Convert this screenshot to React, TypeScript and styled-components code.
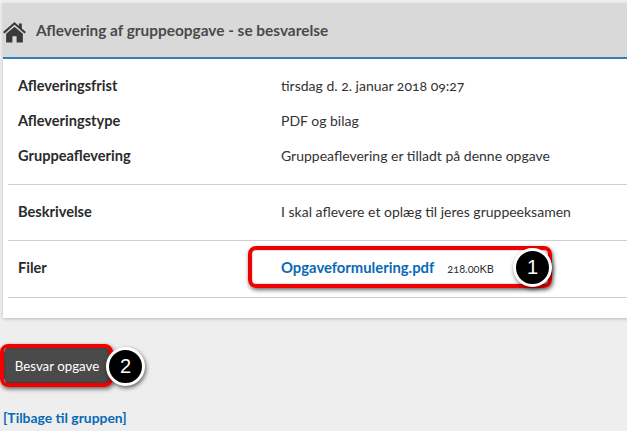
import React from "react";
import styled, { createGlobalStyle } from "styled-components";

const Global = createGlobalStyle`
  html, body { margin: 0; padding: 0; background: #eeeeee; }
  body { font-family: Lato, "Open Sans", sans-serif; font-variant-numeric: oldstyle-nums; width: 627px; height: 431px; overflow: hidden; }
`;

const Page = styled.div`
  position: relative;
  width: 627px;
  height: 431px;
  padding: 3px 0 0 3px;
  box-sizing: border-box;
`;

const Panel = styled.section`
  background: #fff;
  box-shadow: 0 1px 3px rgba(0, 0, 0, 0.22);
  height: 315px;
  margin-right: -4px;
`;

const Header = styled.header`
  display: flex;
  align-items: center;
  gap: 10px;
  height: 54px;
  background: #d9d9d9;
  border-bottom: 2px solid #2f7fb8;
`;

const Title = styled.h1`
  margin: 0;
  font-size: 15.4px;
  font-weight: 700;
  color: #4a4a4a;
`;

const Body = styled.div`
  padding: 10px 0 0 5px;
`;

const Group = styled.div<{ $pad: string }>`
  display: flex;
  flex-direction: column;
  gap: 15px;
  padding: ${(p) => p.$pad};
  border-bottom: 1px solid #cfcfcf;
`;

const Row = styled.div`
  display: grid;
  grid-template-columns: 263px 1fr;
  align-items: center;
  height: 20px;
  padding-left: 10px;
`;

const Label = styled.div`
  font-size: 14.6px;
  font-weight: 700;
  color: #2b2b2b;
`;

const Value = styled.div`
  font-size: 14px;
  color: #333;
`;

const FileLink = styled.a`
  font-size: 14.8px;
  font-weight: 700;
  color: #0a69b5;
`;

const FileSize = styled.span`
  font-size: 11px;
  color: #333;
  margin-left: 13px;
`;

const Actions = styled.div`
  padding-top: 29px;
`;

const Button = styled.button`
  display: block;
  width: 108px;
  height: 37px;
  margin: 0 0 0 1px;
  background: #4a4a4a;
  color: #fff;
  border: 0;
  border-radius: 6px;
  font: 400 13.3px Lato, sans-serif;
  padding: 0 2px 0 0;
`;

const BackLink = styled.a`
  display: block;
  margin-top: 25px;
  font-size: 13.9px;
  font-weight: 700;
  color: #0a69b5;
`;

const Callout = styled.div<{ $l: number; $t: number; $w: number; $h: number }>`
  position: absolute;
  left: ${(p) => p.$l}px;
  top: ${(p) => p.$t}px;
  width: ${(p) => p.$w}px;
  height: ${(p) => p.$h}px;
  box-sizing: border-box;
  border: 4px solid #f00000;
  border-radius: 8px;
  box-shadow: 1px 2px 4px rgba(0, 0, 0, 0.6), inset 0 0 2px rgba(0, 0, 0, 0.4);
`;

const Badge = styled.div<{ $l: number; $t: number }>`
  position: absolute;
  left: ${(p) => p.$l}px;
  top: ${(p) => p.$t}px;
  width: 39px;
  height: 39px;
  box-sizing: border-box;
  border-radius: 50%;
  background: #000;
  border: 3px solid #fff;
  box-shadow: 1px 2px 4px rgba(0, 0, 0, 0.6);
  color: #fff;
  font: 400 20px "Liberation Sans", sans-serif;
  display: flex;
  align-items: center;
  justify-content: center;
`;

const HomeIcon = () => (
  <svg width="23" height="21" viewBox="0 0 22 20" style={{ marginTop: 4, flex: "none" }}>
    <path fill="#3a3a3a" d="M11 0 L15.2 3.7 V1.5 H18 V6.1 L22 9.6 L20.6 11 L11 2.7 L1.4 11 L0 9.6 Z" />
    <path fill="#3a3a3a" d="M11 4.4 L19 11.2 V19.5 H13 V13.5 H9 V19.5 H3 V11.2 Z" />
  </svg>
);

export default function App() {
  return (
    <Page>
      <Global />
      <Panel>
        <Header>
          <HomeIcon />
          <Title>Aflevering af gruppeopgave - se besvarelse</Title>
        </Header>
        <Body>
          <Group $pad="6px 0 19px">
            <Row><Label>Afleveringsfrist</Label><Value>tirsdag d. 2. januar 2018 09:27</Value></Row>
            <Row><Label>Afleveringstype</Label><Value>PDF og bilag</Value></Row>
            <Row><Label>Gruppeaflevering</Label><Value>Gruppeaflevering er tilladt på denne opgave</Value></Row>
          </Group>
          <Group $pad="16px 0 19px">
            <Row><Label>Beskrivelse</Label><Value>I skal aflevere et oplæg til jeres gruppeeksamen</Value></Row>
          </Group>
          <Group $pad="16px 0 20px">
            <Row>
              <Label>Filer</Label>
              <Value><FileLink>Opgaveformulering.pdf</FileLink><FileSize>218.00KB</FileSize></Value>
            </Row>
          </Group>
        </Body>
      </Panel>
      <Actions>
        <Button>Besvar opgave</Button>
        <BackLink>[Tilbage til gruppen]</BackLink>
      </Actions>
      <Callout $l={248} $t={246} $w={304} $h={42} />
      <Callout $l={0} $t={344} $w={113} $h={43} />
      <Badge $l={513} $t={248}>1</Badge>
      <Badge $l={106} $t={347}>2</Badge>
    </Page>
  );
}
